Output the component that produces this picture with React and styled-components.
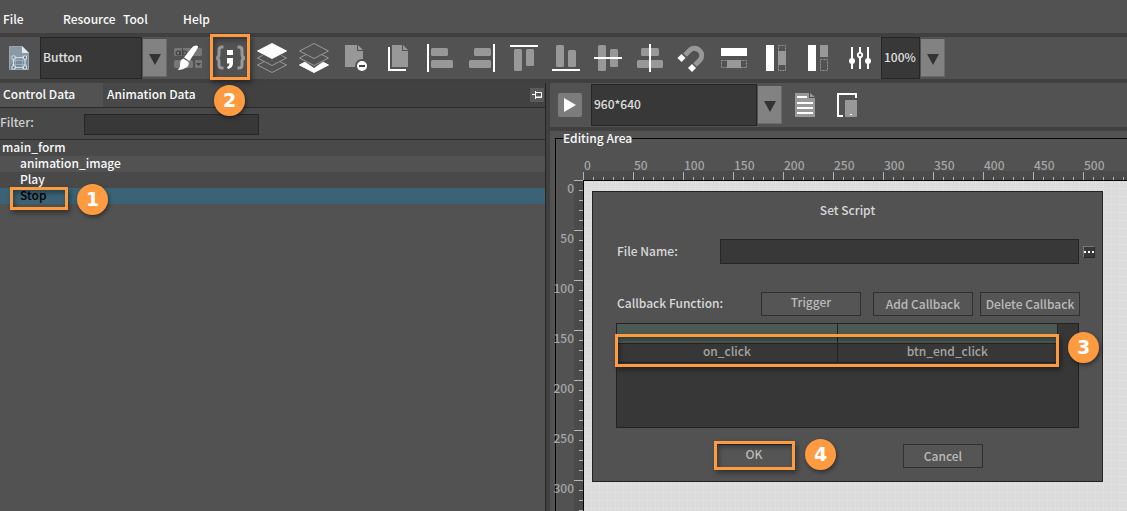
import React from "react";
import styled, { createGlobalStyle, css } from "styled-components";

const accent = "#fe9b41";

const GlobalStyle = createGlobalStyle`
  *, *::before, *::after { box-sizing: border-box; }
  html, body { margin: 0; }
  body {
    background: #404040;
    color: #fafafa;
    font: 500 12px/16px "Noto Sans CJK SC", "Noto Sans", sans-serif;
    overflow: hidden;
  }
  button, input, select { font: inherit; color: inherit; margin: 0; border-radius: 0; }
  button { cursor: pointer; }
`;

/* ---------- shell ---------- */

const Shell = styled.div`
  display: flex;
  flex-direction: column;
  gap: 4px;
  height: 100vh;
`;

const MenuBar = styled.nav`
  display: flex;
  flex: none;
  height: 33px;
  padding-top: 4px;
  background: #525252;
`;

const MenuItem = styled.button`
  width: 60px;
  padding: 0 0 0 3px;
  border: 0;
  background: none;
  text-align: left;
`;

const ToolBar = styled.div`
  display: flex;
  flex: none;
  align-items: center;
  height: ${(p) => p.$height}px;
  background: #525252;
`;

const ToolButton = styled.button`
  position: relative;
  flex: none;
  width: ${(p) => p.$width || 42}px;
  height: 42px;
  padding: 0;
  border: 0;
  background: none;
  svg { display: block; }
`;

const Workspace = styled.main`
  display: flex;
  flex: 1;
  min-height: 0;
  gap: 4px;
`;

/* ---------- combo box ---------- */

const ComboWrap = styled.div`
  display: flex;
  flex: none;
  align-items: center;
`;

const ComboSelect = styled.select`
  appearance: none;
  width: ${(p) => p.$width}px;
  height: 42px;
  padding: 0 0 2px 2px;
  border: 1px solid #252525;
  background: #383838;
  color: #e0e0e0;
  outline: 0;
`;

const ComboArrow = styled.span`
  display: flex;
  align-items: center;
  justify-content: center;
  width: 24px;
  height: 38px;
  margin-left: 1px;
  background: #828282;
  border-right: 1px solid #6a6a6a;
  border-bottom: 1px solid #6a6a6a;
  &::after {
    content: "";
    margin-top: 4px;
    border: 6px solid transparent;
    border-bottom-width: 0;
    border-top: 11px solid #333;
  }
`;

function Combo({ width, label, value }) {
  return (
    <ComboWrap>
      <ComboSelect $width={width} aria-label={label} defaultValue={value}>
        <option>{value}</option>
      </ComboSelect>
      <ComboArrow aria-hidden="true" />
    </ComboWrap>
  );
}

/* ---------- numbered call-outs ---------- */

const Frame = styled.span`
  position: absolute;
  z-index: 2;
  left: ${(p) => p.$left}px;
  top: ${(p) => p.$top}px;
  width: ${(p) => p.$width};
  height: ${(p) => p.$height}px;
  border: 3px solid ${accent};
  box-shadow: 2px 3px 5px rgba(0, 0, 0, 0.4), inset 2px 3px 5px rgba(0, 0, 0, 0.35);
  pointer-events: none;
`;

const Badge = styled.span`
  position: absolute;
  z-index: 3;
  left: ${(p) => p.$left};
  top: ${(p) => p.$top}px;
  width: 31px;
  height: 31px;
  border-radius: 50%;
  background: ${accent};
  color: #fff;
  font: 700 19px/31px "DejaVu Sans", sans-serif;
  text-align: center;
  box-shadow: 1px 2px 4px rgba(0, 0, 0, 0.45);
  pointer-events: none;
`;

/* ---------- left panel ---------- */

const SidePanel = styled.section`
  display: flex;
  flex-direction: column;
  flex: 0 0 546px;
  border-right: 1px solid #262626;
  background: #525252;
`;

const TabStrip = styled.div`
  display: flex;
  flex: none;
  align-items: stretch;
  height: 25px;
  border-bottom: 1px solid #2b2b2b;
  background: #414141;
`;

const Tab = styled.button`
  width: ${(p) => p.$width}px;
  padding: 0 0 2px ${(p) => (p.$active ? 3 : 4)}px;
  border: 0;
  background: ${(p) => (p.$active ? "#525252" : "#484848")};
  text-align: left;
`;

const PinButton = styled.button`
  width: 14px;
  height: 14px;
  margin: 5px 1px 0 auto;
  padding: 0;
  border: 0;
  background: #5a5a5a;
  svg { display: block; }
`;

const FilterRow = styled.div`
  display: flex;
  flex: none;
  height: 32px;
  padding: 6px 0 0;
  border-bottom: 1px solid #2b2b2b;
  background: #484848;
`;

const FilterLabel = styled.label`
  width: 84px;
  color: #d0d0d0;
`;

const field = css`
  border: 1px solid #262626;
  background: #383838;
  outline: 0;
`;

const FilterInput = styled.input`
  ${field}
  width: 175px;
  height: 21px;
`;

const Tree = styled.ul`
  margin: 0;
  padding: 0;
  list-style: none;
`;

const TreeItem = styled.li`
  position: relative;
  height: 16px;
  padding-left: ${(p) => (p.$child ? 20 : 2)}px;
  background: ${(p) => (p.$selected ? "#3b6375" : p.$alt ? "#525252" : "#494949")};
  color: ${(p) => (p.$selected ? "#000" : "#fafafa")};
  line-height: 14px;
`;

/* ---------- editor ---------- */

const Editor = styled.section`
  display: flex;
  flex-direction: column;
  flex: 1;
  min-width: 0;
  gap: 4px;
`;

const EditingArea = styled.fieldset`
  display: flex;
  flex: 1;
  min-width: 0;
  min-height: 0;
  margin: 0;
  padding: 0;
  border: solid #060606;
  border-width: 1px 0 0 1px;
`;

const EditingPane = styled.div`
  display: flex;
  flex: 1;
  min-height: 0;
  padding-left: 5px;
  background: #525252;
`;

const Legend = styled.legend`
  margin-left: 7px;
  padding: 0;
  line-height: 14px;
`;

const Stage = styled.div`
  display: grid;
  flex: 1;
  min-width: 0;
  height: 100%;
  grid-template: 35px 1fr / 27px 1fr;
`;

const TopRuler = styled.div`
  grid-column: 2;
  display: flex;
  overflow: hidden;
  padding-top: 13px;
  color: #a6a6a6;
  background:
    repeating-linear-gradient(90deg, #b4b4b4 0 1px, transparent 1px 50px) 0 100% / 100% 8px no-repeat,
    repeating-linear-gradient(90deg, #b4b4b4 0 1px, transparent 1px 10px) 0 100% / 100% 3px no-repeat,
    linear-gradient(#4a4a4a, #4a4a4a) 0 100% / 100% 9px no-repeat;
  span { flex: 0 0 50px; line-height: 14px; padding-left: 1px; }
`;

const SideRuler = styled.div`
  grid-row: 2;
  color: #a6a6a6;
  background:
    repeating-linear-gradient(#b4b4b4 0 1px, transparent 1px 50px) 100% 0 / 9px 100% no-repeat,
    repeating-linear-gradient(#b4b4b4 0 1px, transparent 1px 10px) 100% 0 / 4px 100% no-repeat,
    linear-gradient(#4a4a4a, #4a4a4a) 100% 0 / 9px 100% no-repeat;
  min-height: 0;
  span {
    display: flex;
    justify-content: flex-end;
    height: 50px;
    padding-right: 9px;
    line-height: 16px;
  }
`;

const Canvas = styled.div`
  grid-row: 2;
  grid-column: 2;
  min-height: 0;
  padding: 10px 24px 0 8px;
  border: solid #060606;
  border-width: 1px 0 0 1px;
  background:
    repeating-linear-gradient(90deg, transparent 0 7px, #e1e1e1 7px 8px),
    repeating-linear-gradient(transparent 0 7px, #e1e1e1 7px 8px),
    #dcdcdc;
`;

/* ---------- dialog ---------- */

const Dialog = styled.form`
  display: flex;
  flex-direction: column;
  height: 291px;
  padding: 0 23px;
  border: 1px solid #222;
  background: #525252;
  color: #d8d8d8;
`;

const DialogTitle = styled.h1`
  margin: 10px 0 21px;
  font: inherit;
  text-align: center;
`;

const FileRow = styled.div`
  display: flex;
  align-items: center;
  height: 25px;
  margin: 0 -16px 28px 1px;
  label { flex: 0 0 103px; padding-bottom: 2px; }
`;

const FileInput = styled.input`
  ${field}
  flex: 1;
  min-width: 0;
  height: 25px;
`;

const BrowseButton = styled.button`
  display: flex;
  align-items: center;
  justify-content: center;
  gap: 2px;
  width: 12px;
  height: 12px;
  margin: 0 0 0 4px;
  padding: 0;
  border: 1px solid #2a2a2a;
  border-top-color: #777;
  border-left-color: #777;
  background: #383838;
  i { width: 2px; height: 2px; background: #fff; }
`;

const ActionRow = styled.div`
  display: flex;
  align-items: center;
  margin: 0 -1px 7px 1px;
`;

const ActionLabel = styled.span`
  flex: 1;
  padding-bottom: 2px;
`;

const DialogButton = styled.button`
  position: relative;
  flex: none;
  width: ${(p) => p.$width}px;
  height: 24px;
  margin-left: ${(p) => p.$gap || 0}px;
  padding: 0 0 ${(p) => (p.$raised ? 4 : 0)}px;
  border: 1px solid #303030;
  background: #555;
  color: #bababa;
  line-height: 16px;
  white-space: nowrap;
`;

const TableBox = styled.div`
  position: relative;
  height: 105px;
  border: 1px solid #222;
  background: #373737;
`;

const CallbackTable = styled.table`
  width: calc(100% - 20px);
  border-collapse: collapse;
  table-layout: fixed;
  th, td {
    padding: 0;
    border: solid #222;
    border-width: 0 1px 1px 0;
    font-weight: inherit;
    text-align: center;
  }
  th { height: 19px; background: #4d5a53; }
  td { height: 18px; padding-bottom: 4px; color: #a4a4a4; line-height: 14px; }
`;

const DialogFooter = styled.div`
  display: flex;
  justify-content: center;
  gap: 109px;
  margin-top: 16px;
  padding-left: 2px;
`;

/* ---------- icons ---------- */

const GREY = "#989898";
const BG = "#525252";

const Icon = ({ w = 42, h = 42, children }) => (
  <svg width={w} height={h} viewBox={`0 0 ${w} ${h}`} fill="none" aria-hidden="true">{children}</svg>
);
const Bar = ({ x, y, w, h }) => <rect x={x} y={y} width={w} height={h} rx="1.5" fill={GREY} />;
const Line = ({ x, y, w, h }) => <rect x={x} y={y} width={w} height={h} fill="#fff" />;
const Dashed = ({ x, y, w, h }) => (
  <rect x={x + 0.5} y={y + 0.5} width={w - 1} height={h - 1} stroke="#949494" strokeDasharray="2 1" />
);

const FormIcon = () => (
  <Icon w={40}>
    <path d="M9.500 9.500h12.500l6.500 6.500v16.500h-19z" fill="#7b8a97" stroke="#98a5b0" />
    <path d="M10 10h12v6h6v3L10 27z" fill="#95a3af" opacity=".6" />
    <path d="M22 9l7 7h-7z" fill="#e4eaf0" />
    <path d="M15.500 19v13M22.500 19v13M12 23.500h15M12 27.500h15" stroke="#a9b9c6" strokeWidth=".7" />
    <path d="M13.500 20.500h11.500v10H13.500z" stroke="#cfdde8" strokeWidth="1.200" />
    <path d="M12 19h3v3h-3zM23.500 19h3v3h-3zM12 29h3v3h-3zM23.500 29h3v3h-3z" fill="#5f7486" stroke="#dce8f2" strokeWidth=".9" />
  </Icon>
);

const BrushIcon = () => (
  <Icon>
    <rect x="7" y="11" width="28" height="8" rx="1.5" fill="#777" />
    <rect x="7" y="23" width="19" height="8" rx="1.5" fill="#777" />
    <rect x="28" y="23" width="7" height="8" rx="1" fill="#777" />
    <path d="M29 26h5l-2.500 3z" fill="#444" />
    <circle cx="11" cy="16" r="1.900" stroke="#444" strokeWidth="1.200" />
    <path d="M13.300 13.500v5M15.500 11.500v7" stroke="#444" strokeWidth="1.200" />
    <circle cx="17.700" cy="16" r="1.900" stroke="#444" strokeWidth="1.200" />
    <path d="M25.500 10Q28 7.500 31 9Q31.500 10 29.500 13L22.500 24L17 20.500z" fill="#fff" />
    <path d="M16.500 21.500l5 3.500q1 4-3 6-3 2-8 2 3-2.500 2.500-5.500 0-5 3.500-6z" fill="#fff" />
  </Icon>
);

const ScriptIcon = () => (
  <Icon>
    <path d="M14.500 10h-1.500q-3 0-3 3v4q0 4-3 4 3 0 3 4v3q0 3 3 3h1.500M28.500 10h1.500q3 0 3 3v4q0 4 3 4-3 0-3 4v3q0 3-3 3h-1.500" stroke="#999" strokeWidth="3" />
    <path d="M18 13h6v5h-6zM18 21h6v5q0 5-5 6l-1-2q2.500-1 2.500-3.500H18z" fill="#fff" />
  </Icon>
);

const diamond = (cy) => `M6.500 ${cy}L21 ${cy - 7.5}L35.500 ${cy}L21 ${cy + 7.5}Z`;

const RaiseIcon = () => (
  <Icon>
    <path d={diamond(28)} fill={BG} stroke="#999" />
    <path d={diamond(21)} fill={BG} stroke="#999" />
    <path d="M4 14L21 24L38 14z" fill={BG} />
    <path d={diamond(14)} fill="#fff" stroke="#fff" />
  </Icon>
);

const LowerIcon = () => (
  <Icon>
    <path d={diamond(28)} fill="#fff" stroke="#fff" />
    <path d="M8 22L21 31L34 22L21 13z" fill={BG} />
    <path d={diamond(21)} fill={BG} stroke="#999" />
    <path d={diamond(14)} fill={BG} stroke="#999" />
  </Icon>
);

const RemoveIcon = () => (
  <Icon>
    <path d="M10 8h12v6h6v16H10z" fill={GREY} />
    <path d="M23 8v5h5z" fill={GREY} />
    <circle cx="27" cy="29" r="7" fill={BG} />
    <circle cx="27" cy="29" r="5" fill="#fff" />
    <path d="M24 29h6" stroke="#444" strokeWidth="2" />
  </Icon>
);

const CopyIcon = () => (
  <Icon>
    <path d="M12 10v23h17" stroke="#fff" strokeWidth="2" />
    <path d="M15 8h10v6h6v16H15z" fill={GREY} />
    <path d="M26 8v5h5z" fill={GREY} />
  </Icon>
);

const AlignLeftIcon = () => <Icon><Line x={8} y={7} w={2} h={28} /><Bar x={12} y={11} w={17} h={8} /><Bar x={12} y={23} w={22} h={8} /></Icon>;
const AlignRightIcon = () => <Icon><Line x={32} y={7} w={2} h={28} /><Bar x={13} y={11} w={17} h={8} /><Bar x={8} y={23} w={22} h={8} /></Icon>;
const AlignTopIcon = () => <Icon><Line x={7} y={8} w={28} h={2} /><Bar x={11} y={12} w={8} h={22} /><Bar x={23} y={12} w={8} h={17} /></Icon>;
const AlignBottomIcon = () => <Icon><Line x={7} y={32} w={28} h={2} /><Bar x={11} y={8} w={8} h={22} /><Bar x={23} y={13} w={8} h={17} /></Icon>;
const AlignMiddleIcon = () => <Icon><Bar x={11} y={8} w={8} h={26} /><Bar x={23} y={12} w={8} h={18} /><Line x={7} y={20} w={28} h={2} /></Icon>;
const AlignCenterIcon = () => <Icon><Bar x={12} y={11} w={18} h={8} /><Bar x={8} y={23} w={26} h={8} /><Line x={20} y={7} w={2} h={28} /></Icon>;

const MagnetIcon = () => (
  <Icon>
    <path d="M14 18L19 13A7.100 7.100 0 0 1 29 23L24 28" stroke={GREY} strokeWidth="5" />
    <path d="M10.500 17l4 4-4 4-4-4zM21 27l4 4-4 4-4-4z" fill="#fff" />
  </Icon>
);

const SameWidthIcon = () => <Icon><Line x={8} y={11} w={26} h={8} /><Dashed x={8} y={23} w={26} h={8} /><rect x="14" y="23" width="14" height="8" fill={GREY} /></Icon>;
const SameHeightIcon = () => <Icon><Line x={11} y={8} w={8} h={26} /><Dashed x={23} y={8} w={8} h={26} /><rect x="23" y="14" width="8" height="14" fill={GREY} /></Icon>;
const SameSizeIcon = () => <Icon><Line x={11} y={8} w={8} h={26} /><Dashed x={23} y={22} w={8} h={12} /><rect x="23" y="8" width="8" height="12" fill={GREY} /></Icon>;

const SlidersIcon = () => (
  <Icon>
    <path d="M13 10v22M21 10v22M29 10v22" stroke="#fff" strokeWidth="2" />
    <circle cx="13" cy="24" r="3" fill="#fff" />
    <circle cx="29" cy="24" r="3" fill="#fff" />
    <circle cx="21" cy="18" r="2.200" fill={BG} stroke="#fff" strokeWidth="1.800" />
  </Icon>
);

const PinIcon = () => (
  <Icon w={14} h={14}>
    <path d="M2 6.500h4M5.500 3v8M5.500 4.500h6v5h-6M5.500 9h6" stroke="#fff" />
  </Icon>
);

const PlayIcon = () => (
  <Icon w={41}>
    <rect x="8" y="9" width="24" height="24" rx="2" fill="#7c7c7c" />
    <path d="M14 14l12 7-12 7z" fill="#fff" />
  </Icon>
);

const DocumentIcon = () => (
  <Icon>
    <path d="M13 9h14v5h6v19H13z" fill={GREY} />
    <path d="M28 9v4h5z" fill={GREY} />
    <path d="M15 13h10M15 19h16M15 24h16M15 29h16" stroke="#fff" strokeWidth="2" />
  </Icon>
);

const DeviceIcon = () => (
  <Icon>
    <path d="M19 32h-5V10h18v4" stroke="#fff" strokeWidth="2" />
    <rect x="21" y="16" width="12" height="17" rx="1" fill={GREY} />
    <path d="M26 30.500h2" stroke="#fff" />
  </Icon>
);

const tools = [
  ["Edit style", BrushIcon],
  ["Set script", ScriptIcon],
  ["Bring forward", RaiseIcon],
  ["Send backward", LowerIcon],
  ["Remove", RemoveIcon],
  ["Copy", CopyIcon],
  ["Align left", AlignLeftIcon],
  ["Align right", AlignRightIcon],
  ["Align top", AlignTopIcon],
  ["Align bottom", AlignBottomIcon],
  ["Align middle", AlignMiddleIcon],
  ["Align center", AlignCenterIcon],
  ["Snap", MagnetIcon],
  ["Same width", SameWidthIcon],
  ["Same height", SameHeightIcon],
  ["Same size", SameSizeIcon],
  ["Adjust", SlidersIcon],
];

const topMarks = [0, 50, 100, 150, 200, 250, 300, 350, 400, 450, 500];
const sideMarks = [0, 50, 100, 150, 200, 250, 300];

function ScriptDialog() {
  return (
    <Dialog onSubmit={(e) => e.preventDefault()}>
      <DialogTitle>Set Script</DialogTitle>
      <FileRow>
        <label htmlFor="file-name">File Name:</label>
        <FileInput id="file-name" />
        <BrowseButton type="button" aria-label="Browse"><i /><i /><i /></BrowseButton>
      </FileRow>
      <ActionRow>
        <ActionLabel>Callback Function:</ActionLabel>
        <DialogButton type="button" $width={100} $raised>Trigger</DialogButton>
        <DialogButton type="button" $width={100} $gap={12}>Add Callback</DialogButton>
        <DialogButton type="button" $width={100} $gap={7}>Delete Callback</DialogButton>
      </ActionRow>
      <TableBox>
        <CallbackTable>
          <thead><tr><th aria-label="Event" /><th aria-label="Function" /></tr></thead>
          <tbody><tr><td>on_click</td><td>btn_end_click</td></tr></tbody>
        </CallbackTable>
        <Frame $left={-2} $top={10} $width="calc(100% - 17px)" $height={33} />
        <Badge $left="calc(100% - 10px)" $top={8}>3</Badge>
      </TableBox>
      <DialogFooter>
        <DialogButton type="submit" $width={80} $raised>
          OK
          <Frame $left={-1} $top={-4} $width="81px" $height={29} />
          <Badge $left="90px" $top={-6}>4</Badge>
        </DialogButton>
        <DialogButton type="button" $width={80}>Cancel</DialogButton>
      </DialogFooter>
    </Dialog>
  );
}

export default function App() {
  return (
    <>
      <GlobalStyle />
      <Shell>
        <MenuBar>
          {["File", "Resource", "Tool", "Help"].map((name) => <MenuItem key={name}>{name}</MenuItem>)}
        </MenuBar>
        <ToolBar $height={42}>
          <ToolButton $width={40} aria-label="Form"><FormIcon /></ToolButton>
          <Combo width={102} label="Control type" value="Button" />
          {tools.map(([name, Glyph]) => (
            <ToolButton key={name} aria-label={name}>
              <Glyph />
              {name === "Set script" && (
                <>
                  <Frame $left={1} $top={-3} $width="40px" $height={46} />
                  <Badge $left="5px" $top={48}>2</Badge>
                </>
              )}
            </ToolButton>
          ))}
          <Combo width={39} label="Zoom" value="100%" />
        </ToolBar>
        <Workspace>
          <SidePanel>
            <TabStrip>
              <Tab $width={103} $active>Control Data</Tab>
              <Tab $width={118}>Animation Data</Tab>
              <PinButton aria-label="Pin panel"><PinIcon /></PinButton>
            </TabStrip>
            <FilterRow>
              <FilterLabel htmlFor="filter">Filter:</FilterLabel>
              <FilterInput id="filter" />
            </FilterRow>
            <Tree>
              <TreeItem>main_form</TreeItem>
              <TreeItem $child $alt>animation_image</TreeItem>
              <TreeItem $child>Play</TreeItem>
              <TreeItem $child $selected>
                Stop
                <Frame $left={10} $top={-1} $width="58px" $height={23} />
                <Badge $left="77px" $top={-4}>1</Badge>
              </TreeItem>
            </Tree>
          </SidePanel>
          <Editor>
            <ToolBar $height={44}>
              <ToolButton $width={41} aria-label="Run"><PlayIcon /></ToolButton>
              <Combo width={166} label="Resolution" value="960*640" />
              <ToolButton aria-label="Document"><DocumentIcon /></ToolButton>
              <ToolButton aria-label="Device"><DeviceIcon /></ToolButton>
            </ToolBar>
            <EditingPane>
              <EditingArea>
                <Legend>Editing Area</Legend>
                <Stage>
                  <TopRuler>{topMarks.map((n) => <span key={n}>{n}</span>)}</TopRuler>
                  <SideRuler>{sideMarks.map((n) => <span key={n}>{n}</span>)}</SideRuler>
                  <Canvas><ScriptDialog /></Canvas>
                </Stage>
              </EditingArea>
            </EditingPane>
          </Editor>
        </Workspace>
      </Shell>
    </>
  );
}
